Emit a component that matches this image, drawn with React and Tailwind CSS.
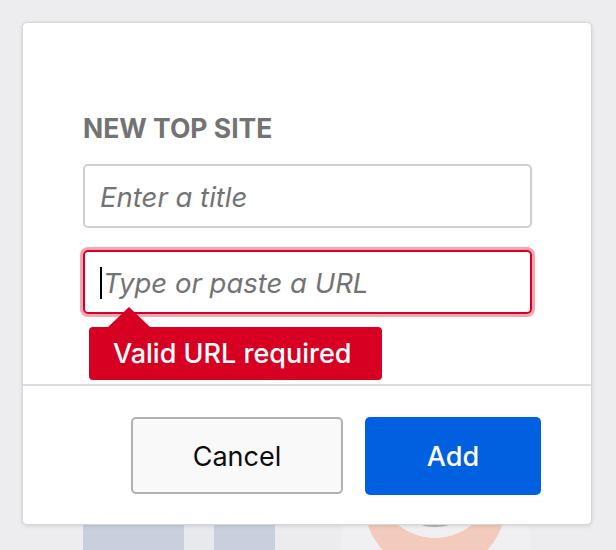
import React from "react";

function Tiles() {
  return (
    <div className="flex pt-[420px] h-[620px]">
      <div className="ml-[83px] w-[101px] h-[200px] bg-[#c9cfdd]"></div>
      <div className="w-[30px] h-[200px] bg-[#e8e9ed]"></div>
      <div className="w-[61px] h-[200px] bg-[#c9cfdd]"></div>
      <div className="w-[66px] h-[200px] bg-[#ececef]"></div>
      <div className="relative w-[188px] h-[200px] bg-[#f0f0f3] overflow-hidden">
        <div className="absolute left-[23px] top-[11px] w-[142px] h-[142px] rounded-full bg-[#f2cbbd]"></div>
        <div className="absolute left-[36px] top-[2px] w-[116px] h-[116px] rounded-full bg-[#f0f0f2]"></div>
        <div className="absolute left-[47px] top-[13px] w-[94px] h-[94px] rounded-full bg-[#b5b5b8]"></div>
      </div>
    </div>
  );
}

function Modal() {
  return (
    <div className="absolute left-[22px] top-[22px] w-[570px] h-[503px] bg-white border border-[#d7d7db] rounded-[5px] shadow-[0_1px_4px_rgba(12,12,13,0.12)] flex flex-col">
      <div className="h-[363px] border-b-2 border-[#dcdce0] pt-[89px] pl-[60px]">
        <h3 className="text-[26.5px] leading-[32px] font-bold text-[#737373] uppercase">New Top Site</h3>
        <div className="mt-[20px] w-[449px] h-[64px] border-2 border-[#cfcfd1] rounded-[5px] flex items-center pl-[15px] pt-[3px]">
          <span className="text-[27.5px] italic text-[#737373]">Enter a title</span>
        </div>
        <div className="relative mt-[22px] w-[449px] h-[64px] border-2 border-[#d70022] rounded-[5px] shadow-[0_0_0_3px_#f3a6b1] flex items-center pl-[15px]">
          <span className="w-[2px] h-[32px] bg-black mr-[1px] mt-[2px]"></span>
          <span className="text-[27.5px] italic text-[#737373] pt-[3px]">Type or paste a URL</span>
          <div className="absolute left-[4px] top-[75px] w-[293px] h-[53px] bg-[#d70022] rounded-[4px] flex items-center pl-[24px]">
            <span className="absolute -top-[20px] left-[19px] w-0 h-0 border-l-[21px] border-r-[21px] border-b-[20px] border-l-transparent border-r-transparent border-b-[#d70022]"></span>
            <span className="text-[27px] font-medium text-white pt-[1px]">Valid URL required</span>
          </div>
        </div>
      </div>
      <div className="flex justify-end gap-[22px] pr-[50px] pt-[31px]">
        <button className="w-[212px] h-[77px] border-2 border-[#b1b1b3] bg-[#f9f9fa] rounded-[5px] text-[27px] text-[#0c0c0d] pt-[3px]">Cancel</button>
        <button className="w-[176px] h-[78px] bg-[#0060df] rounded-[5px] text-[27px] font-medium text-white pt-[3px]">Add</button>
      </div>
    </div>
  );
}

export default function App() {
  return (
    <div className="relative w-[616px] h-[550px] overflow-hidden bg-[#ededf0] font-['Inter',sans-serif]">
      <Tiles />
      <Modal />
    </div>
  );
}
